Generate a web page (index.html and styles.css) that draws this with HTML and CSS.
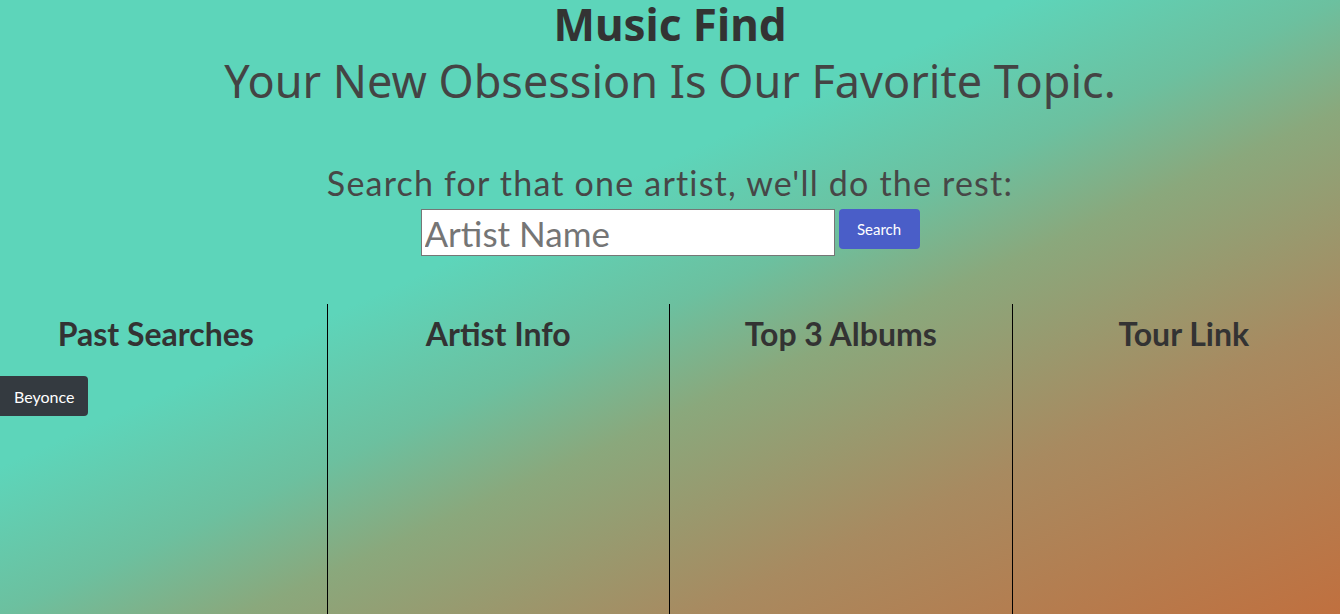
FILE: index.html
```html
<!DOCTYPE html>
<html lang="en">
<head>
<meta charset="utf-8">
<title>Music Find</title>
<link rel="stylesheet" href="styles.css">
</head>
<body>
<div class="page">
  <header class="hero">
    <h1 class="title">Music Find</h1>
    <p class="tagline">Your New Obsession Is Our Favorite Topic.</p>
  </header>
  <section class="search">
    <p class="search-label">Search for that one artist, we'll do the rest:</p>
    <form class="search-form">
      <input class="search-input" type="text" placeholder="Artist Name">
      <button class="search-btn" type="button">Search</button>
    </form>
  </section>
  <section class="columns">
    <div class="col">
      <h2 class="col-title">Past Searches</h2>
      <div class="history">
        <button class="history-btn" type="button">Beyonce</button>
      </div>
    </div>
    <div class="col">
      <h2 class="col-title">Artist Info</h2>
    </div>
    <div class="col">
      <h2 class="col-title">Top 3 Albums</h2>
    </div>
    <div class="col last">
      <h2 class="col-title">Tour Link</h2>
    </div>
  </section>
</div>
</body>
</html>
```

FILE: styles.css
```css
html, body {
  margin: 0;
  padding: 0;
  height: 100%;
}
body {
  overflow: hidden;
  background: linear-gradient(to bottom right, #5dd5ba 0%, #5dd5ba 38%, #6cc09f 50%, #8aa87c 59%, #a88a60 76%, #c0703f 100%);
  font-family: "Lato", "Liberation Sans", sans-serif;
  color: #333;
}
.page {
  min-height: 100%;
}
.hero {
  text-align: center;
}
.title {
  margin: 0;
  font-family: "Noto Sans", "Open Sans", sans-serif;
  font-weight: 700;
  font-size: 44px;
  line-height: 48px;
  color: #333;
}
.tagline {
  margin: 0;
  font-family: "Noto Sans", "Open Sans", sans-serif;
  font-size: 45px;
  line-height: 66px;
  color: #444;
}
.search {
  text-align: center;
  margin-top: 49px;
}
.search-label {
  margin: 0;
  font-size: 34px;
  line-height: 40px;
  letter-spacing: 1.2px;
  color: #474747;
}
.search-form {
  display: flex;
  justify-content: center;
  align-items: flex-start;
  gap: 4px;
  margin-top: 6px;
}
.search-input {
  box-sizing: border-box;
  width: 414px;
  height: 47px;
  padding: 0 3px;
  border: 1px solid #767676;
  background: #fff;
  font-family: "Lato", sans-serif;
  font-size: 35px;
  color: #333;
}
.search-input::placeholder {
  color: #757575;
}
.search-btn {
  box-sizing: border-box;
  width: 81px;
  height: 40px;
  border: none;
  border-radius: 4px;
  background: #4a5ec8;
  color: #fff;
  font-family: "Lato", sans-serif;
  font-size: 15px;
}
.columns {
  display: grid;
  grid-template-columns: repeat(4, 1fr);
  margin: 48px -15px 0;
}
.col {
  box-sizing: border-box;
  padding: 0 15px;
  min-height: 320px;
  border-right: 1px solid #000;
}
.col.last {
  border-right: none;
}
.col-title {
  margin: 10px 0 0;
  text-align: center;
  font-size: 32px;
  font-weight: 700;
  line-height: 40px;
  color: #333;
}
.history {
  margin-top: 22px;
}
.history-btn {
  height: 40px;
  padding: 0 14px;
  border: none;
  border-radius: 0 4px 4px 0;
  background: #343a40;
  color: #fff;
  font-family: "Lato", sans-serif;
  font-size: 16px;
}
```
